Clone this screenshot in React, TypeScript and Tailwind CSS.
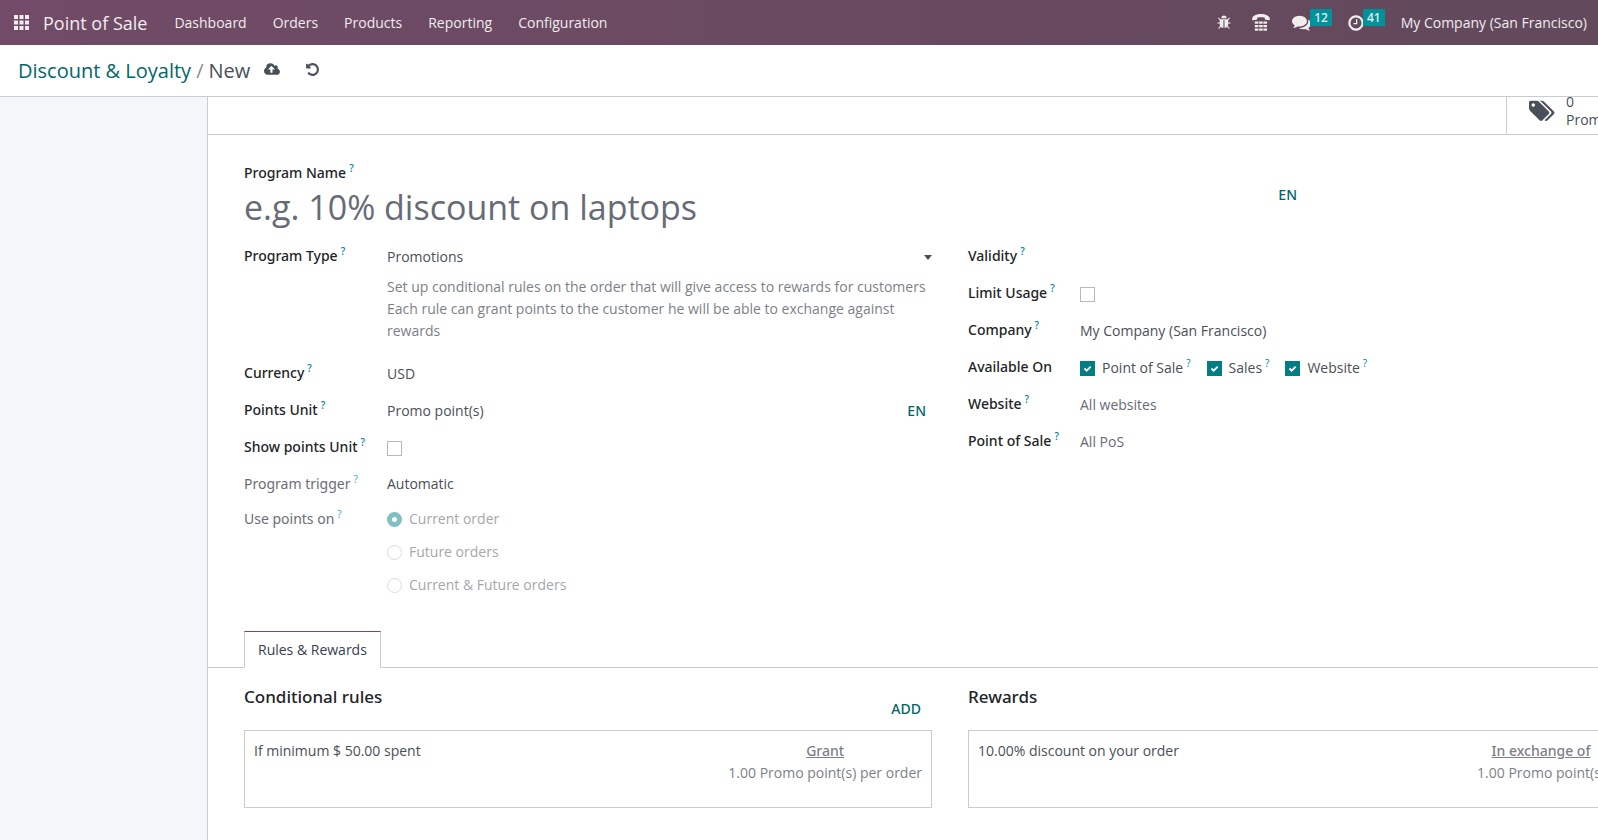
import type { ReactNode } from 'react';
import clsx from 'clsx';

const NAV_ITEMS = ['Dashboard', 'Orders', 'Products', 'Reporting', 'Configuration'];

const ICONS = {
  bug: 'M1632 960q0 26-19 45t-45 19h-224q0 171-67 290l208 209q19 19 19 45t-19 45q-18 19-45 19t-45-19l-198-197q-5 5-15 13t-42 28.5-65 36.5-82 29-97 13v-896h-128v896q-51 0-101.5-13.5t-87-33-66-39-43.5-32.5l-15-14-183 207q-20 21-48 21-24 0-43-16-19-18-20.5-44.5t15.5-46.5l202-227q-58-114-58-274h-224q-26 0-45-19t-19-45 19-45 45-19h224v-294l-173-173q-19-19-19-45t19-45 45-19 45 19l173 173h844l173-173q19-19 45-19t45 19 19 45-19 45l-173 173v294h224q26 0 45 19t19 45zm-480-576h-640q0-133 93.5-226.5t226.5-93.5 226.5 93.5 93.5 226.5z',
  comments:
    'M1408 768q0 139-94 257t-256.5 186.5-353.5 68.5q-86 0-176-16-124 88-278 128-36 9-86 16h-3q-11 0-20.5-8t-11.5-21q-1-3-1-6.5t.5-6.5 2-6l2.5-5 3.5-5.5 4-5 4.5-5 4-4.5q5-6 23-25t26-29.5 22.5-29 25-38.5 20.5-44q-124-72-195-177t-71-224q0-139 94-257t256.5-186.5 353.5-68.5 353.5 68.5 256.5 186.5 94 257zm384 256q0 120-71 224.5t-195 176.5q10 24 20.5 44t25 38.5 22.5 29 26 29.5 23 25q1 1 4 4.5t4.5 5 4 5 3.5 5.5l2.5 5 2 6 .5 6.5-1 6.5q-3 14-13 22t-22 7q-50-7-86-16-154-40-278-128-90 16-176 16-271 0-472-132 58 4 88 4 161 0 309-45t264-129q125-92 192-212t67-254q0-77-23-152 129 71 204 178t75 230z',
  clock:
    'M1024 544v448q0 14-9 23t-23 9h-320q-14 0-23-9t-9-23v-64q0-14 9-23t23-9h224v-352q0-14 9-23t23-9h64q14 0 23 9t9 23zm416 352q0-148-73-273t-198-198-273-73-273 73-198 198-73 273 73 273 198 198 273 73 273-73 198-198 73-273zm224 0q0 209-103 385.5t-279.5 279.5-385.5 103-385.5-103-279.5-279.5-103-385.5 103-385.5 279.5-279.5 385.5-103 385.5 103 279.5 279.5 103 385.5z',
  cloud:
    'M1280 864q0-14-9-23l-352-352q-9-9-23-9t-23 9l-351 351q-10 12-10 24 0 14 9 23t23 9h224v352q0 13 9.5 22.5t22.5 9.5h192q13 0 22.5-9.5t9.5-22.5v-352h224q13 0 22.5-9.5t9.5-22.5zm640 288q0 159-112.5 271.5t-271.5 112.5h-1088q-185 0-316.5-131.5t-131.5-316.5q0-130 70-240t188-165q-2-30-2-43 0-212 150-362t362-150q156 0 285.5 87t188.5 231q71-62 166-62 106 0 181 75t75 181q0 76-41 138 130 31 213.5 135.5t83.5 238.5z',
  undo: 'M1664 896q0 156-61 298t-164 245-245 164-298 61q-172 0-327-72.5t-264-204.5q-7-10-6.5-22.5t8.5-20.5l137-138q10-9 25-9 16 2 23 12 73 95 179 147t225 52q104 0 198.5-40.5t163.5-109.5 109.5-163.5 40.5-198.5-40.5-198.5-109.5-163.5-163.5-109.5-198.5-40.5q-98 0-188 35.5t-160 101.5l137 138q31 30 14 69-17 40-59 40h-448q-26 0-45-19t-19-45v-448q0-42 40-59 39-17 69 14l130 129q107-101 244.5-156.5t284.5-55.5q156 0 298 61t245 164 164 245 61 298z',
  tags: 'M576 448q0-53-37.5-90.5t-90.5-37.5-90.5 37.5-37.5 90.5 37.5 90.5 90.5 37.5 90.5-37.5 37.5-90.5zm1067 576q0 53-37 90l-491 492q-39 37-91 37-53 0-90-37l-715-716q-38-37-64.5-101t-26.5-117v-416q0-52 38-90t90-38h416q53 0 117 26.5t102 64.5l715 714q37 39 37 91zm384 0q0 53-37 90l-491 492q-39 37-91 37-36 0-59-14t-53-45l470-470q37-37 37-90 0-52-37-91l-715-714q-38-38-102-64.5t-117-26.5h224q53 0 117 26.5t102 64.5l715 714q37 39 37 91z',
};

function Icon({ name, wide, className }: { name: keyof typeof ICONS; wide?: boolean; className?: string }) {
  return (
    <svg viewBox={wide ? '0 0 2048 1792' : '0 0 1792 1792'} fill="currentColor" className={className} aria-hidden="true">
      <path d={ICONS[name]} />
    </svg>
  );
}

function AppsIcon() {
  return (
    <svg viewBox="0 0 15 15" fill="currentColor" className="size-[15px]" aria-hidden="true">
      {[0, 5.5, 11].map((y) => [0, 5.5, 11].map((x) => <rect key={`${x}-${y}`} x={x} y={y} width="4" height="4" />))}
    </svg>
  );
}

function TtyIcon() {
  return (
    <svg viewBox="0 0 18 17" fill="currentColor" className="h-[17px] w-[18px]" aria-hidden="true">
      <path d="M9 0C4.6 0 .3 1.8.1 4.9c0 .8.1 1.2.7 1.3l3.6-.5c.6-.1.8-.4.8-1V3.8C7.4 3.2 10.6 3.2 12.8 3.8v.9c0 .6.2.9.8 1l3.6.5c.6-.1.7-.5.7-1.3C17.7 1.8 13.4 0 9 0z" />
      {[7.5, 11, 14.5].map((y) =>
        [2.8, 7.1, 11.4].map((x) => <rect key={`${x}-${y}`} x={x} y={y} width="3.6" height="2.2" />),
      )}
    </svg>
  );
}

function Help({ faded }: { faded?: boolean }) {
  return <sup className={clsx('top-[-6px] ml-[3px] text-[10px] leading-none', faded ? 'text-[#4aa9c7]' : 'text-[#0180a5]')}>?</sup>;
}

type RowProps = {
  label: string;
  htmlFor?: string;
  help?: boolean;
  readonly?: boolean;
  children?: ReactNode;
};

function Row({ label, htmlFor, help = true, readonly, children }: RowProps) {
  return (
    <>
      <label
        htmlFor={htmlFor}
        className={clsx(
          "pt-1 font-['Noto_Sans'] whitespace-nowrap",
          readonly ? 'text-[#6b6e76]' : 'font-medium text-[#212529]',
        )}
      >
        {label}
        {help && <Help faded={readonly} />}
      </label>
      <div className={clsx('flex min-w-0 items-start', readonly ? 'min-h-[35px] pt-1' : 'min-h-[37px] pt-[5px]')}>{children}</div>
    </>
  );
}

const CHECKBOX =
  'size-[15px] shrink-0 appearance-none border border-[#b5b8be] bg-white checked:border-[#017e84] checked:bg-[#017e84]';

function Checkbox({ id, checked }: { id: string; checked?: boolean }) {
  return (
    <span className="relative flex h-[22px] items-center">
      <input id={id} type="checkbox" defaultChecked={checked} className={CHECKBOX} />
      {checked && (
        <svg viewBox="0 0 15 15" className="pointer-events-none absolute left-0 size-[15px]" aria-hidden="true">
          <path d="M4.5 7.5l2.2 2.2 4-4" fill="none" stroke="white" strokeWidth="1.8" />
        </svg>
      )}
    </span>
  );
}

const CHANNELS = ['Point of Sale', 'Sales', 'Website'];
const ORDER_SCOPES = ['Current order', 'Future orders', 'Current & Future orders'];

type RuleCardProps = { text: string; title: string; points: string; className?: string };

function RuleCard({ text, title, points, className }: RuleCardProps) {
  return (
    <article className={clsx('flex h-[78px] items-start justify-between border border-[#c9ccd2] py-[9px] pl-[9px]', className)}>
      <p>{text}</p>
      <div className="text-center whitespace-nowrap text-[#7c7f89]">
        <p className="font-['Noto_Sans'] font-medium underline">{title}</p>
        <p>{points}</p>
      </div>
    </article>
  );
}

export default function App() {
  return (
    <div className="flex h-screen flex-col overflow-hidden bg-white font-['Open_Sans','Noto_Sans',sans-serif] text-[14px] leading-[22px] text-[#4a4f59]">
      <nav className="flex h-[45px] shrink-0 items-center bg-linear-to-r from-[#714b67] to-[#62495b] pr-[11px] pl-3.5 text-[#f0edef]">
        <button aria-label="Apps">
          <AppsIcon />
        </button>
        <a href="#pos" className="ml-3.5 text-[18px]">
          Point of Sale
        </a>
        <div className="ml-[27px] flex gap-[26px]">
          {NAV_ITEMS.map((item) => (
            <a key={item} href={`#${item.toLowerCase()}`}>
              {item}
            </a>
          ))}
        </div>
        <div className="ml-auto flex items-center">
          <button aria-label="Debug">
            <Icon name="bug" className="size-[15px]" />
          </button>
          <button aria-label="Phone" className="ml-5">
            <TtyIcon />
          </button>
          <button className="ml-[22px] flex items-center" aria-label="Messages">
            <Icon name="comments" className="size-[19px]" />
            <span className="mb-2.5 -ml-px bg-[#00929b] px-1 font-['Noto_Sans'] text-[12px] leading-[17px] font-medium">12</span>
          </button>
          <button className="ml-[15px] flex items-center" aria-label="Activities">
            <Icon name="clock" className="size-[18px]" />
            <span className="mb-2.5 -ml-0.5 bg-[#00929b] px-1 font-['Noto_Sans'] text-[12px] leading-[17px] font-medium">41</span>
          </button>
          <button className="ml-4">My Company (San Francisco)</button>
        </div>
      </nav>

      <header className="flex h-[52px] shrink-0 items-center border-b border-[#c9ccd2] px-[18px] text-[20px]">
        <a href="#programs" className="text-[#01666b]">
          Discount &amp; Loyalty
        </a>
        <span className="mx-[5px] text-[#8a8d96]">/</span>
        <span>New</span>
        <button aria-label="Save manually" className="mb-0.5 ml-3.5">
          <Icon name="cloud" wide className="h-[15px] w-[17px]" />
        </button>
        <button aria-label="Discard changes" className="mb-0.5 ml-6">
          <Icon name="undo" className="size-[15px]" />
        </button>
      </header>

      <main className="flex flex-1 overflow-hidden bg-[#f5f6fa] pl-[207px]">
        <div className="min-w-[1485px] flex-1 border-l border-[#c9ccd2] bg-white">
          <div className="flex h-[38px] justify-end border-b border-[#c9ccd2]">
            <button className="flex w-[186px] items-center border-l border-[#c9ccd2] pl-5 text-left">
              <Icon name="tags" wide className="mb-2.5 h-6 w-7" />
              <span className="mb-2.5 ml-[11px] leading-[18px]">
                <span className="block">0</span>
                <span className="block">Promos</span>
              </span>
            </button>
          </div>

          <form className="px-9 pt-[27px]">
            <label htmlFor="name" className="block font-['Noto_Sans'] font-medium text-[#212529]">
              Program Name
              <Help />
            </label>
            <div className="mb-3 flex w-[1053px] items-start">
              <input
                id="name"
                placeholder="e.g. 10% discount on laptops"
                className="h-[45px] min-w-0 flex-1 text-[34px] outline-none placeholder:text-[#666b76]"
              />
              <button type="button" className="font-['Noto_Sans'] font-medium text-[#01666b]">
                EN
              </button>
            </div>

            <div className="grid grid-cols-2 items-start gap-9">
              <div className="grid grid-cols-[143px_1fr]">
                <Row label="Program Type" htmlFor="type">
                  <div className="flex-1">
                    <div className="relative flex items-center">
                      <select id="type" className="flex-1 appearance-none outline-none">
                        <option>Promotions</option>
                      </select>
                      <svg viewBox="0 0 8 5" className="pointer-events-none absolute right-0 h-[5px] w-2" aria-hidden="true">
                        <path d="M0 0h8L4 5z" fill="currentColor" />
                      </svg>
                    </div>
                    <p className="mt-2 mb-4 text-[#7c7f89]">
                      Set up conditional rules on the order that will give access to rewards for customers
                      <br />
                      Each rule can grant points to the customer he will be able to exchange against rewards
                    </p>
                  </div>
                </Row>
                <Row label="Currency" htmlFor="currency">
                  <input id="currency" defaultValue="USD" className="w-full outline-none" />
                </Row>
                <Row label="Points Unit" htmlFor="unit">
                  <input id="unit" defaultValue="Promo point(s)" className="min-w-0 flex-1 outline-none" />
                  <button type="button" className="mr-1.5 font-['Noto_Sans'] font-medium text-[#01666b]">
                    EN
                  </button>
                </Row>
                <Row label="Show points Unit" htmlFor="show-unit">
                  <Checkbox id="show-unit" />
                </Row>
                <Row label="Program trigger" readonly>
                  Automatic
                </Row>
                <Row label="Use points on" readonly>
                  <div className="flex flex-col gap-[11px]">
                    {ORDER_SCOPES.map((scope, i) => (
                      <label key={scope} className="flex items-center gap-[7px] text-[#a5a7ac]">
                        <input
                          type="radio"
                          name="scope"
                          disabled
                          defaultChecked={i === 0}
                          className="size-[15px] appearance-none rounded-full border border-[#dadbde] checked:border-[5px] checked:border-[#80bfc2]"
                        />
                        {scope}
                      </label>
                    ))}
                  </div>
                </Row>
              </div>

              <div className="grid grid-cols-[112px_1fr]">
                <Row label="Validity" />
                <Row label="Limit Usage" htmlFor="limit">
                  <Checkbox id="limit" />
                </Row>
                <Row label="Company" htmlFor="company">
                  <input id="company" defaultValue="My Company (San Francisco)" className="w-full outline-none" />
                </Row>
                <Row label="Available On" help={false}>
                  <div className="flex gap-4">
                    {CHANNELS.map((channel) => (
                      <div key={channel} className="flex gap-[7px]">
                        <Checkbox id={`on-${channel}`} checked />
                        <label htmlFor={`on-${channel}`}>
                          {channel}
                          <Help />
                        </label>
                      </div>
                    ))}
                  </div>
                </Row>
                <Row label="Website" htmlFor="website">
                  <input id="website" placeholder="All websites" className="w-full outline-none placeholder:text-[#666b76]" />
                </Row>
                <Row label="Point of Sale" htmlFor="pos">
                  <input id="pos" placeholder="All PoS" className="w-full outline-none placeholder:text-[#666b76]" />
                </Row>
              </div>
            </div>
          </form>

          <div className="mt-[35px] flex border-b border-[#c9ccd2] px-9" role="tablist">
            <button
              role="tab"
              aria-selected="true"
              className="-mb-px h-[37px] border border-t-[#714b67] border-r-[#c9ccd2] border-b-white border-l-[#c9ccd2] bg-white px-[13px] text-[#374151]"
            >
              Rules &amp; Rewards
            </button>
          </div>

          <div className="grid grid-cols-2 gap-9 px-9 pt-[18px]">
            <section>
              <div className="flex h-11 items-start justify-between pr-[11px]">
                <h2 className="font-['Noto_Sans'] text-[17px] font-medium text-[#212529]">Conditional rules</h2>
                <button className="mt-3 font-['Noto_Sans'] font-medium text-[#01666b]">ADD</button>
              </div>
              <RuleCard text="If minimum $ 50.00 spent" title="Grant" points="1.00 Promo point(s) per order" className="pr-[9px]" />
            </section>
            <section>
              <div className="flex h-11 items-start">
                <h2 className="font-['Noto_Sans'] text-[17px] font-medium text-[#212529]">Rewards</h2>
              </div>
              <RuleCard text="10.00% discount on your order" title="In exchange of" points="1.00 Promo point(s)" className="pr-[50px]" />
            </section>
          </div>
        </div>
      </main>
    </div>
  );
}
